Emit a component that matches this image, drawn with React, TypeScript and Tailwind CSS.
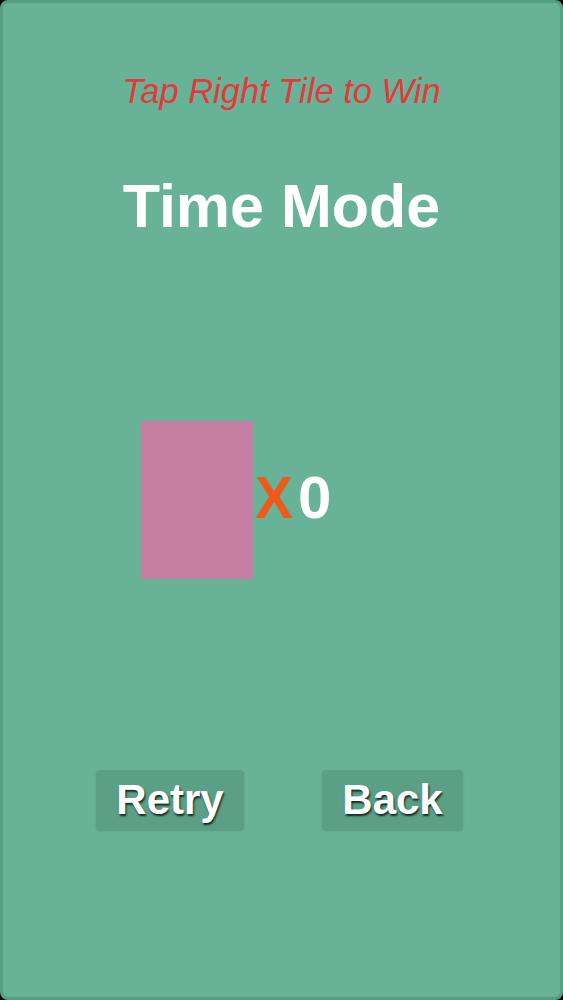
const font = "font-['Liberation_Sans','Helvetica',Arial,sans-serif]";

function GameButton({ label, width }: { label: string; width: string }) {
    return (
        <button
            className={`${width} h-[60px] flex items-center justify-center rounded-[4px] bg-[#5a9f86] shadow-[0_1px_2px_rgba(0,0,0,0.15)]`}
        >
            <span className="text-[42px] leading-none font-bold text-white [text-shadow:1px_2px_2px_rgba(0,0,0,0.75)]">
                {label}
            </span>
        </button>
    );
}

export default function App() {
    return (
        <div className={`w-[563px] h-[1000px] bg-black ${font}`}>
            <div className="w-full h-full flex flex-col items-center rounded-[8px] border-[3px] border-[#559f85] bg-[#68b297]">
                {/* Hint */}
                <p className="mt-[71px] text-[34.5px] leading-none italic text-[#e5383b]">
                    Tap Right Tile to Win
                </p>

                {/* Title */}
                <h1 className="mt-[67px] text-[61px] leading-none font-bold text-white">
                    Time Mode
                </h1>

                {/* Tile + score */}
                <div className="mt-[184px] flex items-start w-full pl-[138px]">
                    <div className="w-[112px] h-[158px] bg-[#c67ea3]" />
                    <div className="mt-[47px] ml-[2px] flex items-start text-[60px] leading-none font-bold">
                        <span className="text-[#ee5a1c] scale-x-[0.95] origin-left">X</span>
                        <span className="ml-[3px] text-white">0</span>
                    </div>
                </div>

                {/* Buttons */}
                <div className="mt-[191px] flex w-full pl-[93px] gap-[78px]">
                    <GameButton label="Retry" width="w-[148px]" />
                    <GameButton label="Back" width="w-[141px]" />
                </div>
            </div>
        </div>
    );
}
